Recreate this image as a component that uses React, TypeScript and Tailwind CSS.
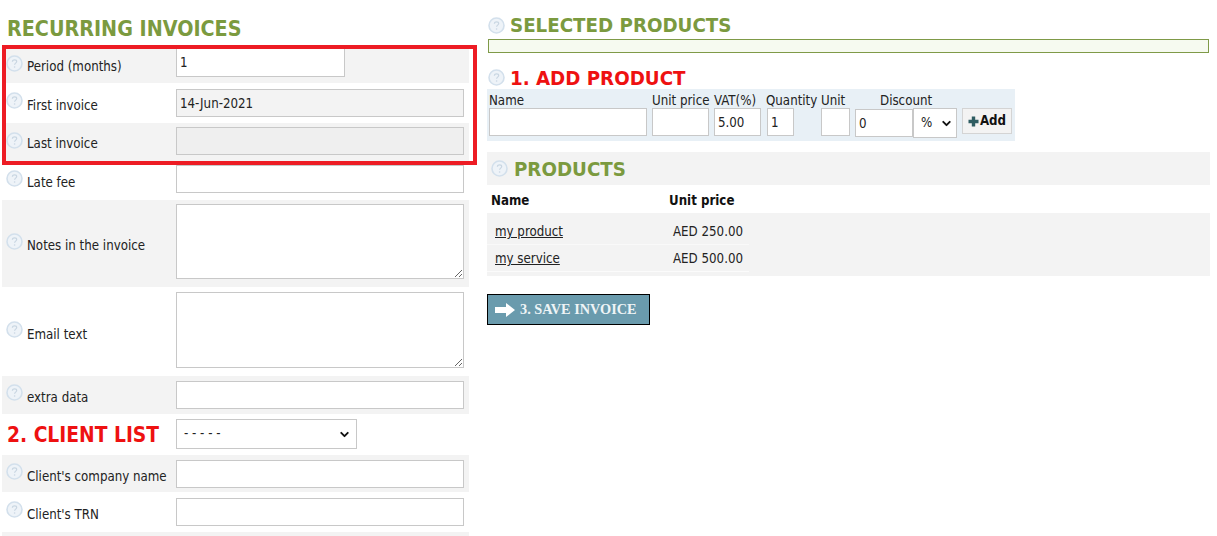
import React from "react";
import { ChevronDown } from "lucide-react";

function Help({ className = "" }: { className?: string }) {
  return (
    <svg width="17" height="17" viewBox="0 0 17 17" className={"shrink-0 " + className}>
      <circle cx="8.5" cy="8.5" r="7.5" fill="#eef3f8" stroke="#d3e0ec" strokeWidth="1.6" />
      <path d="M6.4 6.8c0-1.3 1-2 2.2-2s2.1.8 2.1 1.8c0 1.5-2.1 1.6-2.1 3.2" fill="none" stroke="#c9d6e2" strokeWidth="1.2" />
      <circle cx="8.6" cy="12" r=".8" fill="#c9d6e2" />
    </svg>
  );
}

function Field({
  label, h, top, gray, children, lt = "mt-[3px]",
}: { label: string; h: string; top: string; gray?: boolean; children: React.ReactNode; lt?: string }) {
  return (
    <div className={`flex w-[467px] ${h} ${gray ? "bg-[#f3f3f3]" : "bg-white"}`}>
      <div className="flex w-[174px] shrink-0 items-center gap-[4px] pl-[4px]">
        <Help className="-mt-[5px]" />
        <span className={`${lt} whitespace-nowrap`}>{label}</span>
      </div>
      <div className={top}>{children}</div>
    </div>
  );
}

const box = "block border border-[#c8c8c8] px-[3px] text-[13.2px] text-[#222] outline-none";

function Select({ w, text, chevronClass }: { w: string; text: string; chevronClass: string }) {
  return (
    <div className={`relative h-[30px] ${w}`}>
      <select className={box + " h-[30px] w-full appearance-none bg-white pl-[7px]"}>
        <option>{text}</option>
      </select>
      <ChevronDown size={13} strokeWidth={3.5} className={`pointer-events-none absolute top-[9px] text-[#111] ${chevronClass}`} />
    </div>
  );
}

export default function App() {
  return (
    <div className="relative flex h-[536px] w-[1217px] overflow-hidden bg-white font-['DejaVu_Sans_Condensed','DejaVu_Sans',sans-serif] text-[13.2px] text-[#222]">
      {/* Left column */}
      <div className="ml-[2px] w-[467px] shrink-0">
        <h1 className="h-[48px] pt-[14px] pl-[5px] text-[21.3px] leading-[30px] font-bold text-[#7b9a3f]">RECURRING INVOICES</h1>
        <Field label="Period (months)" h="h-[35px]" top="pt-0" gray lt="mt-[3px]">
          <input readOnly value="1" className={box + " h-[29px] w-[169px] bg-white"} />
        </Field>
        <Field label="First invoice" h="h-[40px]" top="pt-[6px]" lt="mt-[5px]">
          <input readOnly value="14-Jun-2021" className={box + " h-[28px] w-[288px] bg-[#f3f3f3]"} />
        </Field>
        <Field label="Last invoice" h="h-[39px]" top="pt-[4px]" gray lt="mt-[3px]">
          <input readOnly className={box + " h-[28px] w-[288px] bg-[#efefef]"} />
        </Field>
        <Field label="Late fee" h="h-[38px]" top="pt-[3px]">
          <input readOnly className={box + " h-[28px] w-[288px] bg-white"} />
        </Field>
        <Field label="Notes in the invoice" h="h-[87px]" top="pt-[4px]" gray lt="mt-[5px]">
          <textarea readOnly className={box + " h-[75px] w-[288px] bg-white"} />
        </Field>
        <Field label="Email text" h="h-[89px]" top="pt-[5px]" lt="mt-[7px]">
          <textarea readOnly className={box + " h-[76px] w-[288px] bg-white"} />
        </Field>
        <Field label="extra data" h="h-[38px]" top="pt-[5px]" gray lt="mt-[5px]">
          <input readOnly className={box + " h-[28px] w-[288px] bg-white"} />
        </Field>
        <div className="flex h-[41px] w-[467px]">
          <div className="w-[174px] shrink-0 pt-[6px] pl-[5px] text-[20.8px] leading-[30px] font-bold whitespace-nowrap text-[#ee1111]">2. CLIENT LIST</div>
          <div className="pt-[5px]">
            <Select w="w-[181px]" text="- - - - -" chevronClass="right-[6px]" />
          </div>
        </div>
        <Field label="Client's company name" h="h-[37px]" top="pt-[5px]" gray lt="mt-[7px]">
          <input readOnly className={box + " h-[28px] w-[288px] bg-white"} />
        </Field>
        <Field label="Client's TRN" h="h-[40px]" top="pt-[6px]" lt="mt-[5px]">
          <input readOnly className={box + " h-[28px] w-[288px] bg-white"} />
        </Field>
        <div className="h-[10px] bg-[#f3f3f3]" />
      </div>

      {/* Right column */}
      <div className="ml-[18px] w-[723px] shrink-0">
        <div className="flex h-[39px] items-start gap-[5px] pt-[10px] pl-[1px] text-[20.3px] leading-[30px] font-bold text-[#7b9a3f]">
          <Help className="mt-[7px]" />
          <span>SELECTED PRODUCTS</span>
        </div>
        <div className="ml-[1px] h-[14px] w-[721px] border border-[#7f9a48] bg-[#f6faf0]" />
        <div className="flex h-[36px] items-start gap-[5px] pt-[10px] pl-[1px] text-[20.3px] leading-[30px] font-bold text-[#ee1111]">
          <Help className="mt-[6px]" />
          <span>1. ADD PRODUCT</span>
        </div>
        <div className="h-[52px] w-[528px] bg-[#e8f0f6] pl-[2px]">
          <div className="flex h-[19px] items-center whitespace-nowrap pt-[5px]">
            <span className="w-[163px]">Name</span>
            <span className="w-[62px]">Unit price</span>
            <span className="w-[52px]">VAT(%)</span>
            <span className="w-[55px]">Quantity</span>
            <span className="w-[59px]">Unit</span>
            <span>Discount</span>
          </div>
          <div className="flex items-start">
            <input readOnly className={box + " h-[28px] w-[158px] bg-white"} />
            <input readOnly className={box + " ml-[5px] h-[28px] w-[57px] bg-white"} />
            <input readOnly value="5.00" className={box + " ml-[5px] h-[28px] w-[47px] bg-white"} />
            <input readOnly value="1" className={box + " ml-[6px] h-[28px] w-[27px] bg-white"} />
            <input readOnly className={box + " ml-[27px] h-[28px] w-[29px] bg-white"} />
            <input readOnly value="0" className={box + " mt-[1px] ml-[5px] h-[28px] w-[58px] bg-white"} />
            <Select w="w-[44px]" text="%" chevronClass="right-[4px]" />
            <button className="ml-[5px] flex h-[26px] w-[50px] items-center justify-center gap-[1px] border border-[#d4d4d4] bg-[#f3f3f3] font-bold text-[#111]">
              <svg width="11" height="11" viewBox="0 0 11 11" className="shrink-0">
                <path d="M3.8 0.5h3.4v3.3h3.3v3.4H7.2v3.3H3.8V7.2H0.5V3.8h3.3z" fill="#2f5d62" />
              </svg>
              <span>Add</span>
            </button>
          </div>
        </div>
        <div className="mt-[11px] flex h-[33px] items-center gap-[6px] bg-[#f3f3f3] pl-[3px] text-[20.3px] font-bold text-[#7b9a3f]">
          <Help className="ml-[1px]" />
          <span className="mt-[1px]">PRODUCTS</span>
        </div>
        <div className="flex h-[28px] items-center pt-[3px] pl-[4px] font-bold text-[#111]">
          <span className="w-[178px]">Name</span>
          <span>Unit price</span>
        </div>
        <div className="h-[63px] bg-[#f3f3f3] pt-[5px]">
          <div className="flex h-[27px] w-[262px] items-center border-b border-[#f9f9f9] pt-[2px] pl-[8px]">
            <a className="w-[178px] underline">my product</a>
            <span>AED 250.00</span>
          </div>
          <div className="flex h-[27px] w-[262px] items-center border-b border-[#fbfbfb] pt-[2px] pl-[8px]">
            <a className="w-[178px] underline">my service</a>
            <span>AED 500.00</span>
          </div>
        </div>
        <button className="mt-[18px] flex h-[31px] w-[163px] items-center gap-[5px] border border-black bg-[#6a9bad] pl-[7px] font-['Liberation_Serif',serif] text-[14.3px] font-bold text-[#eef4f6]">
          <svg width="20" height="14" viewBox="0 0 20 14" className="shrink-0">
            <path d="M0 4h11V0l9 7-9 7v-4H0z" fill="#fff" />
          </svg>
          <span>3. SAVE INVOICE</span>
        </button>
      </div>

      {/* Red annotation frame */}
      <div className="pointer-events-none absolute top-[45px] left-[2px] h-[120px] w-[475px] border-[4px] border-[#ed1c24]" />
    </div>
  );
}
